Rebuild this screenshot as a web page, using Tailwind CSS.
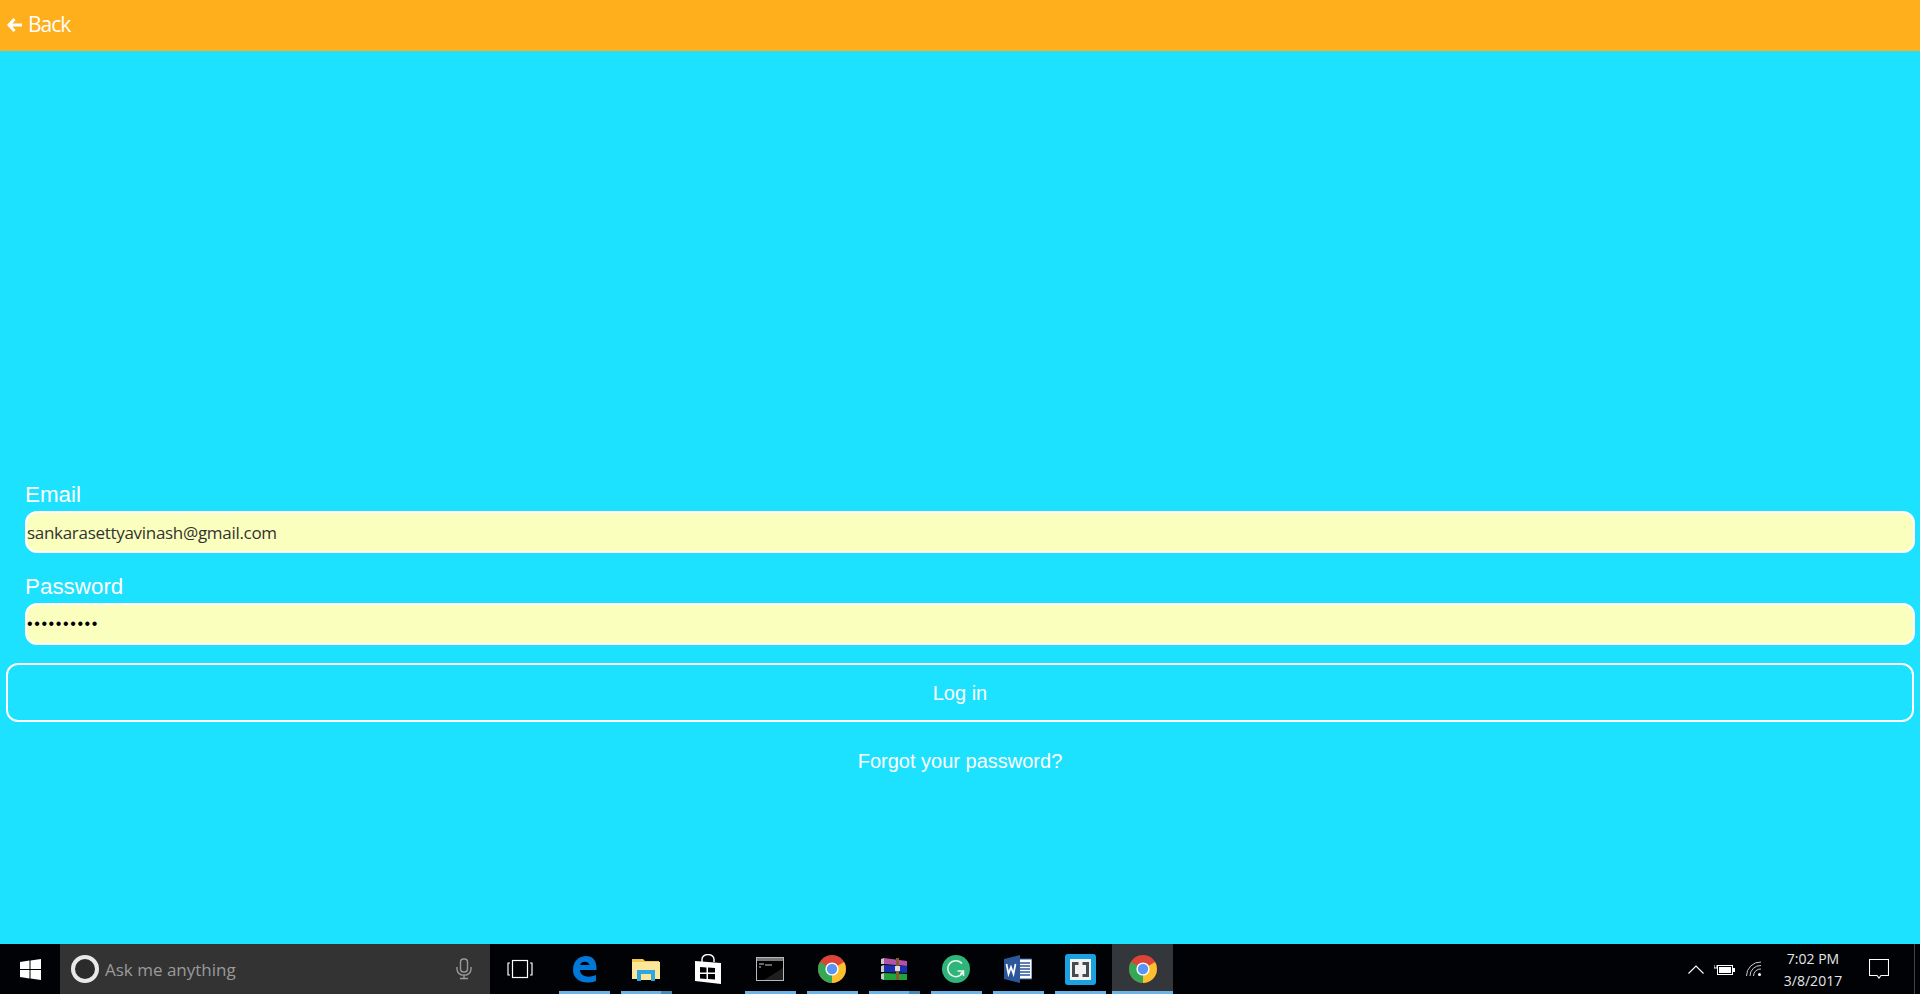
<!DOCTYPE html>
<html lang="en">
<head>
  <meta charset="UTF-8" />
  <meta name="viewport" content="width=device-width, initial-scale=1.0" />
  <title>Log in</title>
  <script src="https://cdn.jsdelivr.net/npm/@tailwindcss/browser@4"></script>
</head>
<body class="bg-[#1ce1ff] h-[994px] overflow-hidden flex flex-col font-['Liberation_Sans',sans-serif]">
  <svg width="0" height="0" class="absolute">
    <symbol id="chrome" viewBox="0 0 28 28">
      <circle cx="14" cy="14" r="14" fill="#db4437"/>
      <path d="M14 14 L26.1 7 A14 14 0 0 1 14 28 Z" fill="#fbc02d"/>
      <path d="M14 14 L14 28 A14 14 0 0 1 1.9 7 Z" fill="#34a853"/>
      <circle cx="14" cy="14" r="6.6" fill="#fff"/>
      <circle cx="14" cy="14" r="5.2" fill="#5a95f5"/>
    </symbol>
  </svg>

  <!-- top bar -->
  <div class="h-[51px] shrink-0 bg-[#ffae1c] flex items-center pl-[7px] pb-[2px] text-white">
    <svg width="15" height="14" viewBox="0 0 15 14" class="mr-[6px]"><path d="M7.500 1 L2 7 L7.500 13 M2 7 H15" fill="none" stroke="#fff" stroke-width="3"/></svg>
    <span class="text-[21px] font-['Open_Sans',sans-serif] tracking-[-1px]">Back</span>
  </div>

  <!-- login form -->
  <main class="flex-1 pt-[427px] text-white">
    <div class="pl-[25px] pr-[5px]">
      <label class="block text-[22.4px] leading-[33px]">Email</label>
      <input type="text" value="sankarasettyavinash@gmail.com" class="block w-full h-[42px] bg-[#fbffbd] border-2 border-white rounded-[12px] text-[17px] text-[#333] font-['Open_Sans',sans-serif] tracking-[-0.3px] outline-none" />
      <label class="block text-[22.4px] leading-[33px] mt-[17px]">Password</label>
      <input type="password" value="1234567890" class="block w-full h-[42px] bg-[#fbffbd] border-2 border-white rounded-[12px] text-[16px] tracking-[1.6px] text-black outline-none" />
    </div>
    <div class="pl-[6px] pr-[6px] mt-[18px]">
      <button class="block w-full h-[59px] border-2 border-white rounded-[12px] text-[20px] text-center">Log in</button>
    </div>
    <p class="text-[20px] text-center mt-[27px] leading-[24px]">Forgot your password?</p>
  </main>

  <!-- windows taskbar -->
  <div class="h-[50px] shrink-0 bg-[#000206] flex items-center text-white font-['Open_Sans',sans-serif]">
    <div class="w-[60px] flex justify-center">
      <svg width="21" height="21" viewBox="0 0 21 21" fill="#fff"><path d="M0 3 L9.500 1.600 V10 H0 Z M10.500 1.500 L21 0 V10 H10.500 Z M0 11 H9.500 V19.400 L0 18 Z M10.500 11 H21 V21 L10.500 19.500 Z"/></svg>
    </div>
    <div class="w-[430px] h-full bg-[#333333] flex items-center pl-[11px] pr-[18px]">
      <span class="w-[28px] h-[28px] rounded-full border-[4px] border-[#e8e8e8] bg-[#2b2b2b] shrink-0"></span>
      <span class="ml-[6px] pt-[1px] text-[17px] text-[#9a9a9a] flex-1">Ask me anything</span>
      <svg width="16" height="22" viewBox="0 0 16 22" fill="none" stroke="#999" stroke-width="1.400"><rect x="4.500" y="1" width="7" height="13" rx="3"/><path d="M1 9 V11 A6 6 0 0 0 8 17 A6 6 0 0 0 15 11 V9 M8 17 V20 M4 20.500 H12"/></svg>
    </div>

    <div class="flex h-full pl-[2px]">
      <!-- task view -->
      <div class="w-[62px] flex items-center justify-center pr-[6px]">
        <svg width="26" height="20" viewBox="0 0 26 20" fill="none" stroke="#fff" stroke-width="1.200"><rect x="5.500" y="1.500" width="15" height="17"/><path d="M3 4 H1 V16 H3 M23 4 H25 V16 H23"/></svg>
      </div>
      <!-- edge -->
      <div class="relative w-[62px] flex items-center justify-center pr-[2px]">
        <svg width="25" height="28" viewBox="0 0 25 28"><path d="M1 15 C1 6 7 1 14 1 C21 1 25 6 24.500 15 H8 C8 20 14 24 24 20 V26 C13 30 1 26 1 15 Z M8 10 H17.500 C17 5.500 9 5.500 8 10 Z" fill="#0078d7" fill-rule="evenodd"/></svg>
        <span class="absolute bottom-0 left-[5px] right-[6px] h-[3px] bg-[#6cb4e6]"></span>
      </div>
      <!-- explorer -->
      <div class="relative w-[62px] flex items-center justify-center pr-[2px]">
        <svg width="28" height="24" viewBox="0 0 28 24"><path d="M0 2 H11 L13 4 H27 V8 H0 Z" fill="#f0c84a"/><path d="M0 5 H28 V22 H0 Z" fill="#fce699"/><path d="M5 22 V13 H23 V22 H19 V17 H9 V22 Z" fill="#2fa6de"/><rect x="9" y="17" width="10" height="6" fill="#fce699"/><rect x="5" y="22" width="4" height="2" fill="#2fa6de"/><rect x="19" y="22" width="4" height="2" fill="#2fa6de"/></svg>
        <span class="absolute bottom-0 left-[5px] right-[6px] h-[3px] bg-[#6cb4e6]"></span>
        <span class="absolute bottom-0 right-[6px] w-[11px] h-[3px] bg-[#4a88b5]"></span>
      </div>
      <!-- store -->
      <div class="relative w-[62px] flex items-center justify-center pr-[2px]">
        <svg width="26" height="30" viewBox="0 0 26 30"><path d="M7 8 V5 A6 4.500 0 0 1 19 5 V8" fill="none" stroke="#fff" stroke-width="1.400"/><path d="M0 7 L26 9 V30 L0 27 Z" fill="#fff"/><path d="M5 13 L11.500 13.500 V18.500 H5 Z M13 13.500 L20 14 V18.500 H13 Z M5 20 H11.500 V25 L5 24.500 Z M13 20 H20 V25.500 L13 25 Z" fill="#000"/></svg>
      </div>
      <!-- cmd -->
      <div class="relative w-[62px] flex items-center justify-center pr-[2px]">
        <svg width="28" height="24" viewBox="0 0 28 24"><rect x="0.500" y="0.500" width="27" height="23" fill="#000" stroke="#b8b8b8"/><rect x="1" y="1" width="26" height="3" fill="#777"/><path d="M27 11 V23 H8 Z" fill="#1f1f1f"/><path d="M3 7 H8 M9 8 H16 M3 10 H5" stroke="#ccc" stroke-width="1"/></svg>
        <span class="absolute bottom-0 left-[5px] right-[6px] h-[3px] bg-[#6cb4e6]"></span>
      </div>
      <!-- chrome -->
      <div class="relative w-[62px] flex items-center justify-center pr-[2px]">
        <svg width="28" height="28"><use href="#chrome"/></svg>
        <span class="absolute bottom-0 left-[5px] right-[6px] h-[3px] bg-[#6cb4e6]"></span>
      </div>
      <!-- winrar -->
      <div class="relative w-[62px] flex items-center justify-center pr-[2px]">
        <svg width="27" height="24" viewBox="0 0 27 24"><path d="M3 1 L26 4 V9 L3 7 Z" fill="#b452a8"/><path d="M3 8 L26 9 V16 L3 15 Z" fill="#1c2fb0"/><path d="M3 16 L26 17 V23 L3 23 Z" fill="#1fa33a"/><path d="M0 2 L3 1 V7 L0 7 Z M0 9 L3 8 V15 L0 15 Z M0 17 L3 16 V23 L0 22 Z" fill="#c9c9c9"/><path d="M15 1 H18 V23 H15 Z" fill="#8a5a2b"/><rect x="14" y="9" width="5" height="5" fill="#ddd"/></svg>
        <span class="absolute bottom-0 left-[5px] right-[6px] h-[3px] bg-[#6cb4e6]"></span>
        <span class="absolute bottom-0 right-[6px] w-[11px] h-[3px] bg-[#4a88b5]"></span>
      </div>
      <!-- grammarly -->
      <div class="relative w-[62px] flex items-center justify-center pr-[2px]">
        <svg width="28" height="28" viewBox="0 0 28 28"><circle cx="14" cy="14" r="14" fill="#2fb47a"/><path d="M20 8.500 A8 8 0 1 0 21.500 16 H15.500 M21.500 16 V21 M21.500 16 L18 19.500" fill="none" stroke="#e8f7ef" stroke-width="1.500"/></svg>
        <span class="absolute bottom-0 left-[5px] right-[6px] h-[3px] bg-[#6cb4e6]"></span>
      </div>
      <!-- word -->
      <div class="relative w-[62px] flex items-center justify-center pr-[2px]">
        <svg width="28" height="28" viewBox="0 0 28 28"><rect x="13" y="4" width="15" height="20" fill="#fff" stroke="#2b579a"/><path d="M15 8 H26 M15 11 H26 M15 14 H26 M15 17 H26 M15 20 H26" stroke="#2b579a" stroke-width="1.400"/><path d="M0 4 L16 0 V28 L0 24 Z" fill="#2b579a"/><path d="M2.500 9 L4.500 19 L7 12 L9.500 19 L11.500 9" fill="none" stroke="#fff" stroke-width="1.700"/></svg>
        <span class="absolute bottom-0 left-[5px] right-[6px] h-[3px] bg-[#6cb4e6]"></span>
      </div>
      <!-- brackets -->
      <div class="relative w-[62px] flex items-center justify-center pr-[2px]">
        <svg width="31" height="31" viewBox="0 0 31 31"><rect width="31" height="31" rx="3" fill="#1ba1e2"/><rect x="5" y="5" width="21" height="21" fill="#f2f2f2"/><path d="M13.500 9.500 H8.500 V21.500 H13.500 M17.500 9.500 H22.500 V21.500 H17.500" fill="none" stroke="#454b50" stroke-width="3"/></svg>
        <span class="absolute bottom-0 left-[5px] right-[6px] h-[3px] bg-[#6cb4e6]"></span>
      </div>
      <!-- chrome, active -->
      <div class="relative w-[61px] flex items-center justify-center bg-[#33373b]">
        <svg width="28" height="28"><use href="#chrome"/></svg>
        <span class="absolute bottom-0 left-0 right-0 h-[3px] bg-[#6cb4e6]"></span>
      </div>
    </div>

    <!-- tray -->
    <div class="flex-1 flex items-center justify-end h-full">
      <svg width="16" height="9" viewBox="0 0 16 9" fill="none" stroke="#fff" stroke-width="1.100" class="mr-[10px]"><path d="M0.500 8.500 L8 1 L15.500 8.500"/></svg>
      <svg width="21" height="13" viewBox="0 0 21 13" class="mr-[11px]"><path d="M0 2 V5 H3 V2" fill="none" stroke="#fff"/><rect x="3.500" y="2.500" width="15" height="9" fill="none" stroke="#fff"/><rect x="5" y="4" width="12" height="6" fill="#fff"/><rect x="19" y="5" width="2" height="4" fill="#fff"/></svg>
      <svg width="16" height="16" viewBox="0 0 16 16" fill="none" stroke="#ccc" stroke-width="1" class="mr-[9px]"><path d="M0.500 15 A14 14 0 0 1 15 1 M4 15 A10.500 10.500 0 0 1 15 4.500 M7.500 15 A7 7 0 0 1 15 8"/><circle cx="13.500" cy="13.500" r="1.500" fill="#fff" stroke="none"/></svg>
      <div class="w-[84px] pt-[2px] text-center text-[14px] leading-[22px] text-[#e6e6e6]">
        <div>7:02 PM</div>
        <div>3/8/2017</div>
      </div>
      <svg width="20" height="20" viewBox="0 0 20 20" fill="none" stroke="#fff" stroke-width="1.100" class="ml-[14px] mr-[31px]"><path d="M0.500 0.500 H19.500 V16.500 H12 L10 19 L8 16.500 H0.500 Z"/></svg>
      <span class="absolute right-[5px] bottom-0 h-[50px] w-px bg-[#444]"></span>
    </div>
  </div>
</body>
</html>
